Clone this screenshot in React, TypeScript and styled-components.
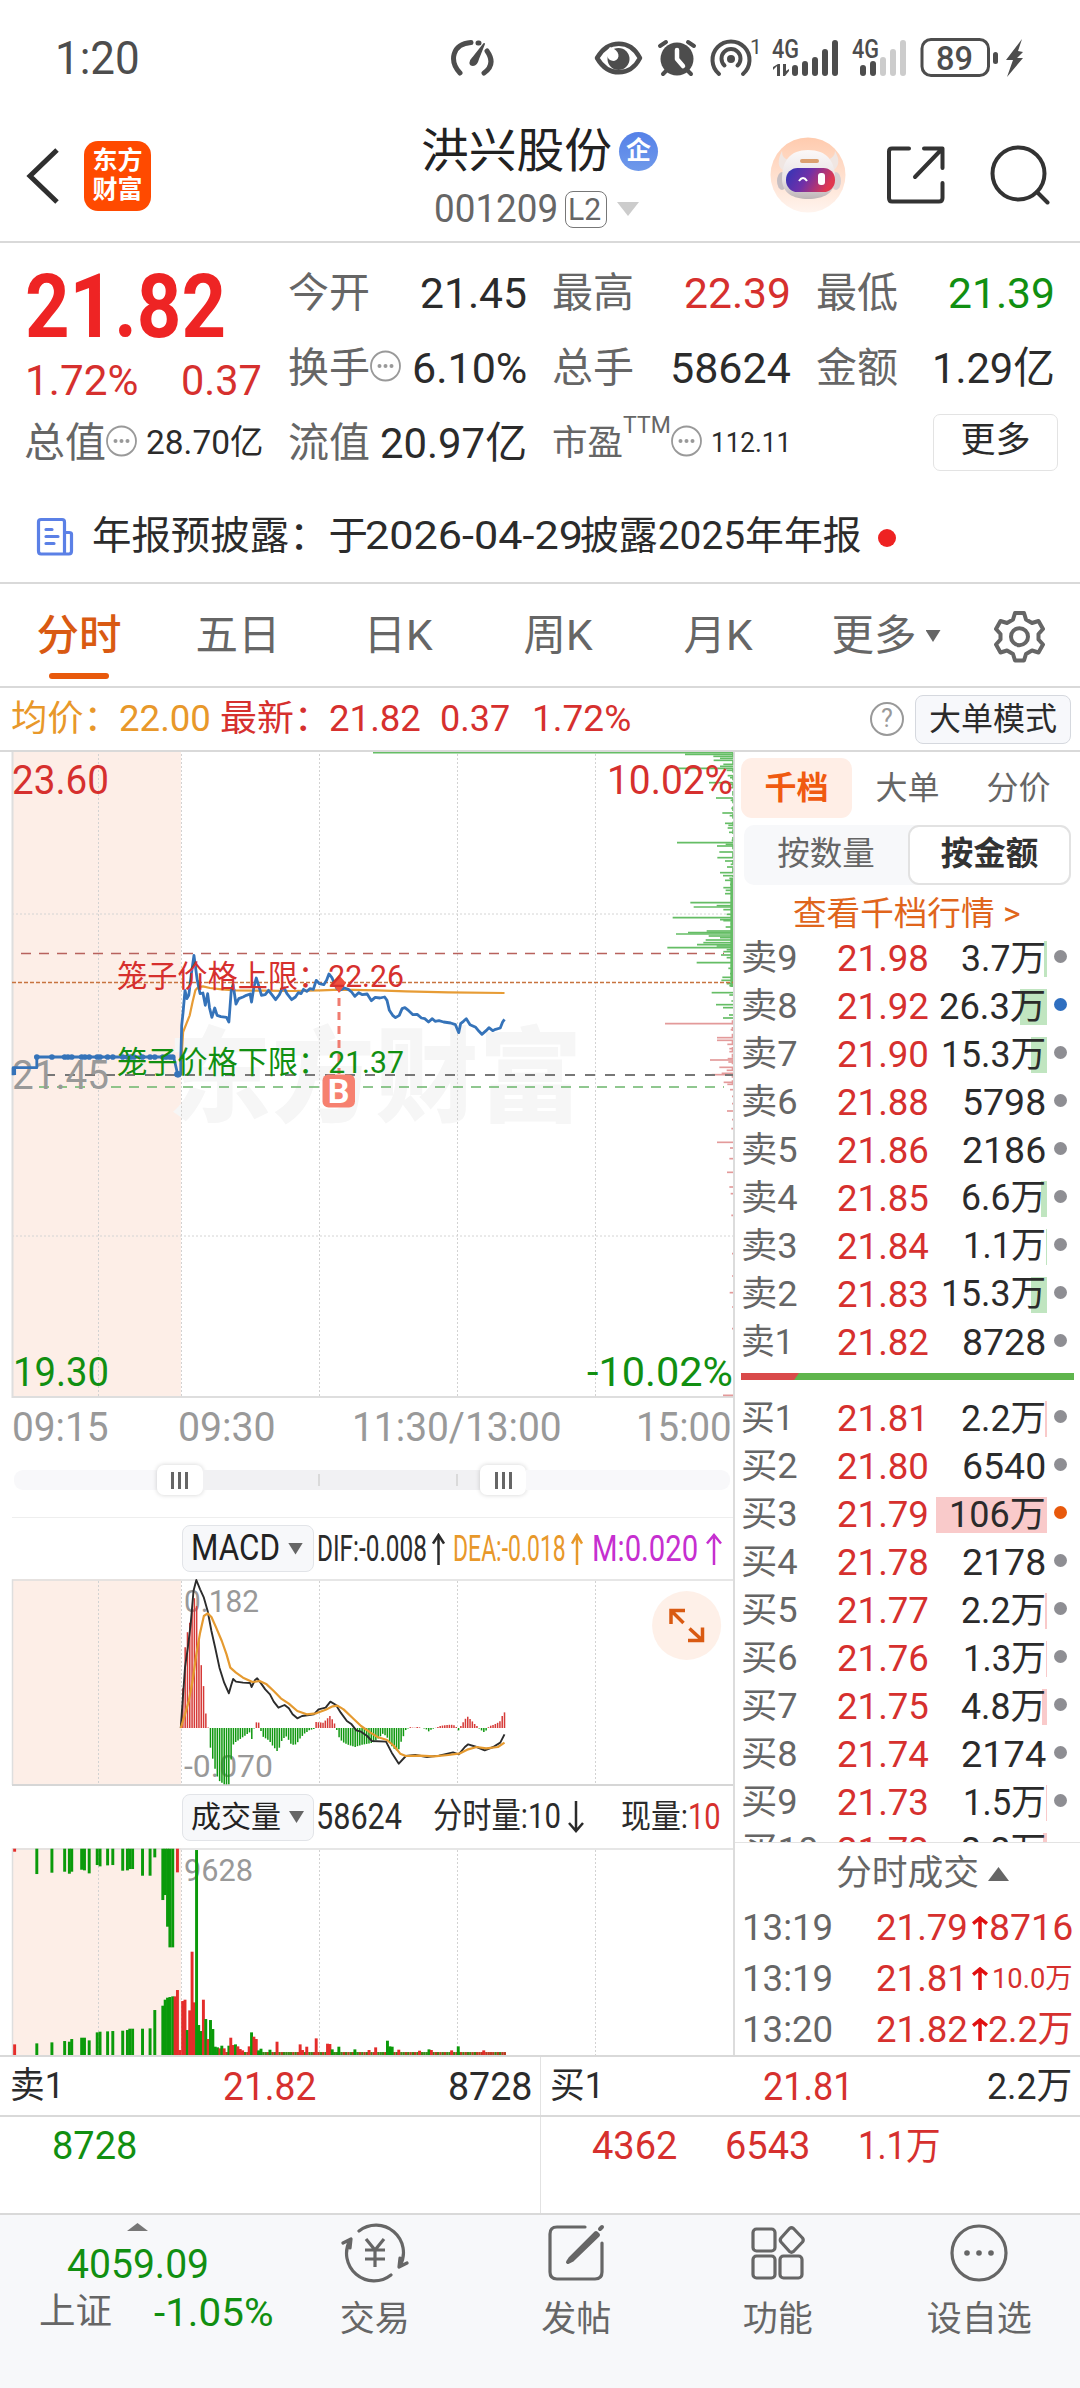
import React, { useLayoutEffect, useRef, useState } from 'react';
import styled, { createGlobalStyle } from 'styled-components';

const C = {
  ink: '#2b2b2b', gray: '#666', light: '#999', red: '#d6302e', green: '#118f11',
  orange: '#e8590c', amber: '#e8982a', line: '#d9d9d9', blue: '#3573b9', pink: '#fdeee7',
};

const Global = createGlobalStyle`
  html, body { margin: 0; background: #fff; }
  body, svg text { font-family: Roboto, "Noto Sans CJK SC", sans-serif; }
  * { box-sizing: border-box; }
  svg { display: block; flex: none; }
`;

/* ---------- text fitted to a fixed width ---------- */
const FitBox = styled.span<{ $w: number; $size: number; $color?: string; $weight?: number }>`
  display: block;
  flex: none;
  width: ${p => p.$w}px;
  font-size: ${p => p.$size}px;
  line-height: ${p => Math.round(p.$size * 1.2)}px;
  color: ${p => p.$color || 'inherit'};
  font-weight: ${p => p.$weight || 400};
  white-space: nowrap;
`;
const FitInner = styled.span`
  display: inline-block;
  margin-left: -2px;
  transform-origin: 0 50%;
  vertical-align: top;
`;
function Fit({ w, s, c, b, children }: { w: number; s: number; c?: string; b?: number; children: React.ReactNode }) {
  const ref = useRef<HTMLSpanElement>(null);
  const [k, setK] = useState(1);
  useLayoutEffect(() => {
    if (ref.current) setK((w + 3) / ref.current.offsetWidth);
  }, [w]);
  return (
    <FitBox $w={w} $size={s} $color={c} $weight={b}>
      <FitInner ref={ref} style={{ transform: `scaleX(${k})` }}>{children}</FitInner>
    </FitBox>
  );
}

const Page = styled.div`
  width: 1080px;
  height: 2388px;
  display: flex;
  flex-direction: column;
  overflow: hidden;
  background: #fff;
  color: ${C.ink};
`;
const Spacer = styled.div<{ $w?: number }>`
  ${p => (p.$w ? `width:${p.$w}px;flex:none;` : 'flex:1;')}
`;

/* ---------- status bar ---------- */
const StatusBar = styled.div`
  height: 116px;
  display: flex;
  align-items: center;
  padding-left: 57px;
  color: #4d4d4d;
`;
const S = '#4d4d4d';
const StatusIcons = () => (
  <svg width="575" height="48" viewBox="449 33 575 48" fill="none" stroke={S} strokeWidth="5" strokeLinecap="round" strokeLinejoin="round">
    <path d="M460 72 C449 60 452 43 471 41.5 M478 42 L479 42 M487 50 C494 60 491 67 484 72" />
    <path d="M484 43 L473 57 C469 61 470 64 473 64 C476 64 477 62 478 58 Z" fill={S} strokeWidth="2" />
    <path d="M597 57 C608 38 630 38 640 57 C630 76 608 76 597 57 Z" strokeWidth="4.5" />
    <circle cx="618.500" cy="58" r="11" fill={S} stroke="none" />
    <path d="M610 46 C620 49 621 58 614 60 C609 60 606 56 607 50 Z" fill="#fff" stroke="none" />
    <circle cx="677" cy="58" r="16.500" fill={S} stroke="none" />
    <path d="M660 45 L666 41 M688 41 L694 45 M667 69 L663 73 M687 69 L691 73" strokeWidth="4" />
    <path d="M677 49 V58 L683 65" stroke="#fff" strokeWidth="4.500" />
    <circle cx="731" cy="58" r="4" fill={S} stroke="none" />
    <path d="M724.500 64.500 A9.500 9.500 0 1 1 737.500 64.500 M719 73 A18.500 18.500 0 1 1 743 73" strokeWidth="4" />
    <g stroke="none" fill={S}>
      <text x="750" y="53" fontSize="21">1</text>
      <text x="772" y="57" fontSize="25" fontWeight="500" textLength="27" lengthAdjust="spacingAndGlyphs">4G</text>
      <path d="M777 75 V65 L773 69 V66 L778 63 H780 V75 Z M783 63 V75 H785 L789 70 V68 L786 70 V63 Z" />
      <rect x="792" y="64" width="6" height="11" rx="3" /><rect x="802" y="60" width="6" height="15" rx="3" />
      <rect x="812" y="56" width="6" height="19" rx="3" /><rect x="822" y="48" width="6" height="27" rx="3" />
      <rect x="832" y="39" width="6" height="36" rx="3" />
      <text x="852" y="57" fontSize="25" fontWeight="500" textLength="27" lengthAdjust="spacingAndGlyphs">4G</text>
      <rect x="860" y="64" width="6" height="11" rx="3" /><rect x="870" y="60" width="6" height="15" rx="3" />
      <g fill="#ccc"><rect x="880" y="56" width="6" height="19" rx="3" /><rect x="890" y="48" width="6" height="27" rx="3" /><rect x="900" y="39" width="6" height="36" rx="3" /></g>
      <text x="936" y="69" fontSize="34" fontWeight="500" textLength="37" lengthAdjust="spacingAndGlyphs">89</text>
      <rect x="993" y="51" width="5" height="12" rx="2.500" />
      <path d="M1022 38 L1006 59 L1013 59 L1007 76 L1023 57 L1017 57 L1023 51 L1018 50 Z" />
    </g>
    <rect x="922" y="38.500" width="66.500" height="36" rx="9" strokeWidth="3" />
  </svg>
);

/* ---------- header ---------- */
const Header = styled.header`
  height: 127px;
  border-bottom: 2px solid ${C.line};
  display: flex;
  align-items: flex-start;
  padding: 6px 29px 0 26px;
`;
const Logo = styled.div`
  width: 67px;
  height: 70px;
  margin: 19px 0 0 25px;
  padding-top: 5px;
  border-radius: 14px;
  background: #ff4a00;
  color: #fff;
  font-size: 25px;
  font-weight: 700;
  line-height: 29px;
  text-align: center;
`;
const Title = styled.div`
  width: 240px;
  margin-left: 272px;
  display: flex;
  flex-direction: column;
`;
const Line = styled.div<{ $h: number; $pl?: number }>`
  display: flex;
  align-items: center;
  height: ${p => p.$h}px;
  padding-left: ${p => p.$pl || 0}px;
`;
const CorpBadge = styled.span`
  width: 39px;
  height: 39px;
  margin-left: 8px;
  border-radius: 50%;
  background: linear-gradient(#5581e8, #6f99ea);
  color: #fff;
  font-size: 25px;
  font-weight: 700;
  line-height: 38px;
  text-align: center;
`;
const Level = styled.span`
  width: 42px;
  height: 37px;
  margin-left: 8px;
  padding-left: 4px;
  border: 1.5px solid #777;
  border-radius: 8px;
  display: flex;
  align-items: center;
  color: ${C.gray};
`;
const Caret = styled.i<{ $w: number; $h: number; $c: string; $up?: boolean; $ml?: number }>`
  width: ${p => p.$w}px;
  height: ${p => p.$h}px;
  margin-left: ${p => p.$ml || 0}px;
  flex: none;
  background: ${p => p.$c};
  clip-path: ${p => (p.$up ? 'polygon(0 100%, 50% 0, 100% 100%)' : 'polygon(0 0, 100% 0, 50% 100%)')};
`;
const Back = () => (
  <svg width="33" height="58" viewBox="0 0 33 58" fill="none" stroke="#2f2f2f" strokeWidth="5"><path d="M31 3 L4 29 L31 55" /></svg>
);
const BackWrap = styled.div`margin-top: 25px;`;
const HeaderTools = styled.div`
  display: flex;
  align-items: center;
  height: 74px;
  margin: 16px 0 0 107px;
`;
const Robot = () => (
  <svg width="76" height="76" viewBox="0 0 76 76">
    <defs>
      <linearGradient id="rb" x1="0" y1="0" x2="0" y2="1"><stop offset="0" stopColor="#ffcbae" /><stop offset="1" stopColor="#fff4ee" /></linearGradient>
      <linearGradient id="rv" x1="0" y1="0" x2="1" y2="0.3"><stop offset="0" stopColor="#2f36b8" /><stop offset="0.5" stopColor="#7030a8" /><stop offset="1" stopColor="#e03850" /></linearGradient>
      <linearGradient id="rh" x1="0" y1="0" x2="0" y2="1"><stop offset="0" stopColor="#fbf8f8" /><stop offset="0.6" stopColor="#e9e3e4" /><stop offset="1" stopColor="#bdb4b6" /></linearGradient>
    </defs>
    <circle cx="38" cy="38" r="37.500" fill="url(#rb)" />
    <path d="M12 14 Q12 22 19 23 L15 34 Q4 30 12 14 M65 14 Q65 20 58 23 L62 34 Q73 28 65 14" fill="#f0e6e2" />
    <ellipse cx="12" cy="44" rx="5" ry="9" fill="#c6bec2" /><ellipse cx="66" cy="44" rx="5" ry="9" fill="#d8d0d2" />
    <path d="M12 42 C12 24 20 13 38 13 C57 13 65 24 65 42 C65 56 54 62 38 62 C23 62 12 56 12 42 Z" fill="url(#rh)" />
    <rect x="30" y="22" width="19" height="4" rx="2" fill="#dca070" />
    <rect x="16" y="31" width="49" height="24" rx="11.500" fill="url(#rv)" />
    <path d="M29 44 Q33 38 37 44" fill="none" stroke="#fff" strokeWidth="2" /><rect x="48" y="36" width="7" height="12" rx="3" fill="#fff" />
  </svg>
);
const Share = () => (
  <svg width="58" height="58" viewBox="0 0 58 58" fill="none" stroke="#333" strokeWidth="4" strokeLinecap="round" strokeLinejoin="round">
    <path d="M22 2.500 H5 Q2 2.500 2 5.500 V52 Q2 55.500 5 55.500 H52 Q55.500 55.500 55.500 52 V37 M37 2.500 H55.500 V22 M53 5 L28 31" />
  </svg>
);
const Search = () => (
  <svg width="60" height="60" viewBox="0 0 60 60" fill="none" stroke="#333" strokeWidth="4" strokeLinecap="round">
    <circle cx="28.500" cy="28.500" r="26" /><path d="M47 47 L57.500 57.500" />
  </svg>
);

/* ---------- quote summary ---------- */
const Quote = styled.section`
  height: 240px;
  display: grid;
  grid-template-columns: repeat(4, 237px);
  grid-template-rows: 75px 75px 75px;
  column-gap: 27px;
  padding: 12px 0 0 25px;
`;
const Cell = styled.div`
  display: flex;
  align-items: center;
  justify-content: space-between;
`;
const Main = styled.div`
  grid-row: span 2;
  display: flex;
  flex-direction: column;
  margin-top: -2px;
  padding-left: 2px;
`;
const Change = styled.div`
  display: flex;
  justify-content: space-between;
  margin-top: -6px;
  width: 234px;
`;
const Label = styled.span<{ $s?: number }>`
  display: flex;
  align-items: center;
  margin-left: -1px;
  font-size: ${p => p.$s || 41}px;
  line-height: 50px;
  color: ${C.gray};
`;
const Ttm = styled.span`
  align-self: flex-start;
  margin-top: -4px;
  font-size: 23px;
  line-height: 24px;
  width: 48px;
`;
const More = styled.button`
  margin: 0 -4px 0 auto;
  width: 125px;
  height: 57px;
  padding: 0 0 3px;
  border: 1.5px solid #e3e3e3;
  border-radius: 7px;
  background: #fff;
  font: 35px/50px Roboto, "Noto Sans CJK SC", sans-serif;
  color: ${C.ink};
`;
const Dots = ({ r = 14.500 }: { r?: number }) => (
  <svg width="31" height="36" viewBox="-15.500 -16 31 36">
    <circle r={r} fill="none" stroke="#999" strokeWidth="1.800" />
    {[-6, 0, 6].map(x => <circle key={x} cx={x} r="2" fill="#999" />)}
  </svg>
);
const Notice = styled.section`
  height: 101px;
  border-bottom: 2px solid ${C.line};
  display: flex;
  align-items: center;
  padding: 8px 0 0 36px;
`;
const NoticeText = styled.div`display:flex; margin-left: 20px;`;
const RedDot = styled.i`
  width: 18px;
  height: 18px;
  margin: 2px 0 0 17px;
  border-radius: 50%;
  background: #ee2222;
`;

/* ---------- tabs ---------- */
const Tabs = styled.nav`
  height: 104px;
  border-bottom: 2px solid ${C.line};
  display: flex;
`;
const Tab = styled.div<{ $on?: boolean; $w?: number }>`
  width: ${p => p.$w || 160}px;
  height: 102px;
  display: flex;
  flex-direction: column;
  align-items: center;
  padding-top: 26px;
  font-size: 42.5px;
  line-height: 52px;
  color: ${p => (p.$on ? '#d95a12' : C.gray)};
  font-weight: ${p => (p.$on ? 500 : 400)};
  &::after {
    content: '';
    width: 60px;
    height: 6px;
    margin-top: 11px;
    border-radius: 3px;
    background: ${p => (p.$on ? C.orange : 'transparent')};
  }
`;
const TabRow = styled.span`display:flex; align-items:center;`;
const GearWrap = styled.div`margin: 26px 0 0 35px;`;
const Gear = () => (
  <svg width="53" height="53" viewBox="0 0 53 53" fill="none" stroke={C.gray} strokeWidth="4" strokeLinejoin="round">
    <path d="M22 3 H31 L33 9.500 L39 13 L45.500 11 L50 19 L45.500 24 V29.500 L50 34.500 L45.500 42.500 L39 40.500 L33 44 L31 50.500 H22 L20 44 L14 40.500 L7.500 42.500 L3 34.500 L7.500 29.500 V24 L3 19 L7.500 11 L14 13 L20 9.500 Z" />
    <circle cx="26.500" cy="26.700" r="8.500" />
  </svg>
);
const InfoBar = styled.div`
  height: 64px;
  border-bottom: 2px solid ${C.line};
  display: flex;
  align-items: center;
  padding-left: 13px;
`;
const Help = styled.span`
  width: 34px;
  height: 34px;
  border: 2px solid #999;
  border-radius: 50%;
  font-size: 25px;
  line-height: 30px;
  text-align: center;
  color: #999;
`;
const Mode = styled.button`
  width: 156px;
  height: 49px;
  margin-left: 11px;
  padding: 0;
  border: 1.5px solid #d5d8de;
  border-radius: 8px;
  background: #f7f8fb;
  font: 32px/44px Roboto, "Noto Sans CJK SC", sans-serif;
  color: ${C.ink};
`;

/* ---------- main area ---------- */
const Body = styled.div`
  height: 1305px;
  display: flex;
  border-bottom: 2px solid ${C.line};
`;
const Charts = styled.div`
  width: 735px;
  border-right: 2px solid #dcdcdc;
  display: flex;
  flex-direction: column;
`;
const K = 740 / 1568;
const T = 1 / 3;
const GRID_X = [98, 181, 319, 457, 595];
const VGrid = ({ h }: { h: number }) => (
  <g stroke="#d2d2d2" strokeWidth="1" strokeDasharray="2 2">
    {GRID_X.map(x => <line key={x} x1={x + 0.5} x2={x + 0.5} y1="2" y2={h} />)}
  </g>
);
const T2 = ({ x, y, s, w, f, children }: { x: number; y: number; s: number; w: number; f: string; children: string }) => (
  <text x={x - 2} y={y} fontSize={s} fill={f} textLength={w + 3} lengthAdjust="spacingAndGlyphs">{children}</text>
);

const PRICE = '383,1000 383,960 385,850 388,810 392,745 396,770 400,760 405,700 411,640 418,715 424,755 430,753 435,790 440,755 444,798 449,826 455,798 460,820 468,824 480,826 485,840 490,745 494,728 500,786 506,770 515,765 522,760 530,756 533,780 538,735 543,708 548,730 554,760 562,758 569,745 576,758 584,773 592,758 597,742 602,738 608,755 618,773 626,765 632,752 638,755 643,742 650,748 657,740 664,742 670,715 677,725 686,728 692,715 697,696 703,706 708,722 714,740 720,745 730,738 738,742 745,750 752,763 760,752 768,758 778,756 787,776 795,766 805,768 815,765 820,775 825,805 832,820 838,827 846,820 852,800 858,797 866,806 875,818 884,817 893,828 900,830 908,840 916,830 922,838 930,836 940,840 955,843 965,848 972,872 976,845 982,838 988,830 996,848 1008,856 1015,868 1021,877 1030,866 1036,857 1044,866 1050,862 1060,858 1065,840 1069,832';
const AVG = '384,960 388,870 395,845 402,820 408,780 414,745 420,735 430,733 445,738 470,742 500,745 560,746 620,747 680,745 720,743 800,745 860,748 950,751 1069,753';
const SPIKES: [number, number][] = [[17, -561], [22, 375], [28, 460], [34, 480], [40, 461], [52, 490], [58, 480], [64, 350], [70, 500], [86, 503], [92, 510], [107, 447], [112, 505], [122, 507], [153, 468], [160, 512], [184, 514], [198, 487], [206, 509], [229, 495], [235, 505], [243, 503], [256, 507], [280, 515], [287, 351], [292, 497], [297, 471], [315, 478], [332, 472], [342, 495], [352, 512], [360, 501], [377, 480], [386, 489], [394, 508], [400, 495], [412, 510], [422, 490], [430, 497], [440, 495], [452, 512], [467, 391], [473, 512], [476, 470], [480, 401], [488, 490], [502, 500], [512, 338], [518, 480], [521, 490], [530, 512], [540, 497], [552, 440], [557, 384], [561, 348], [567, 446], [572, 480], [579, 437], [587, 430], [593, 411], [597, 470], [602, 322], [608, 500], [614, 490], [624, 483], [632, 500], [647, 410], [656, 512], [664, 505], [680, 510], [691, 487], [700, 484], [710, 500], [716, 508], [737, 455], [744, 508], [762, 514], [773, 468], [782, 489], [804, 507], [813, 489]];
const SPIKES_RED: [number, number][] = [[830, 315], [848, 512], [872, 471], [880, 471], [892, 502], [905, 508], [914, 508], [935, 503], [939, 450], [945, 505], [961, 478], [970, 500], [979, 485], [983, 455], [1006, 491], [1012, 502], [1028, 510], [1048, 516], [1070, 516], [1092, 501], [1118, 516], [1145, 514], [1186, 471], [1203, 510], [1235, 508], [1276, 501], [1320, 508], [1340, 512], [1405, 514], [1637, 509], [1520, 516], [1587, 516], [1680, 516], [1745, 516], [1945, 489]];
const AUCTION_DOTS = [78, 110, 137, 144, 152, 173, 180, 189, 206, 212, 228, 239, 260, 270, 277, 284, 302, 318, 328, 345, 352, 360, 366];

const PriceChart = () => (
  <svg width="734" height="646" viewBox="0 0 734 646">
    <rect x="12" y="0" width="169" height="644" fill={C.pink} />
    <text x="168" y="362" fontSize="103" fontWeight="900" fill="#f6f6f6" textLength="414">东方财富</text>
    <VGrid h={644} />
    <g stroke="#d4d4d4" strokeDasharray="2 2"><line x1="12" x2="733" y1="162" y2="162" /><line x1="12" x2="733" y1="484" y2="484" /></g>
    <line x1="12.500" x2="12.500" y1="0" y2="646" stroke="#dedede" strokeWidth="2" />
    <line x1="12" x2="733" y1="645" y2="645" stroke="#dedede" strokeWidth="2" />
    <g transform="translate(560 -5) scale(.33333)" strokeWidth="5">
      <g stroke="#65bd65">{SPIKES.map(([y, x]) => <line key={y} x1={x} x2="519" y1={y} y2={y} />)}
        <path d="M515 395 V720" strokeWidth="8" /><path d="M518 17 V390" strokeWidth="3" strokeDasharray="14 9" /></g>
      <g stroke="#e39a9a">{SPIKES_RED.map(([y, x]) => <line key={y} x1={x} x2="519" y1={y} y2={y} />)}
        <path d="M517 820 V1020" strokeWidth="4" strokeDasharray="12 8" /></g>
    </g>
    <g fill="none" strokeWidth="1.700">
      <line x1="21" x2="724" y1="201.500" y2="201.500" stroke="#b8625d" strokeDasharray="10 8" />
      <line x1="12" x2="733" y1="230.500" y2="230.500" stroke="#c8733f" strokeDasharray="4 2" />
      <line x1="45" x2="733" y1="323" y2="323" stroke="#777" strokeWidth="2" strokeDasharray="10 10" />
      <line x1="21" x2="724" y1="335" y2="335" stroke="#6bb56b" strokeDasharray="10 8" />
    </g>
    <T2 x={14} y={337} s={40.5} w={94} f={C.light}>21.45</T2>
    <g transform={`translate(0 -10) scale(${K} ${T})`} fill="none" strokeLinejoin="round">
      <polyline points={AVG} stroke="#e79c35" strokeWidth="2.200" vectorEffect="non-scaling-stroke" />
      <polyline points="28,1000 28,977 78,977 78,945 368,945 377,1000" stroke={C.blue} strokeWidth="2.800" vectorEffect="non-scaling-stroke" />
      <polyline points={PRICE} stroke={C.blue} strokeWidth="2.800" vectorEffect="non-scaling-stroke" />
      {AUCTION_DOTS.map(x => <ellipse key={x} cx={x} cy="945" rx="6" ry="8.500" fill={C.blue} />)}
      <ellipse cx="377" cy="997" rx="8" ry="10" fill={C.blue} /><rect x="25" y="977" width="9" height="22" fill={C.blue} />
    </g>
    <path d="M339 223 L346 231 L339 241 L332 231 Z" fill="#f0503e" />
    <line x1="339" x2="339" y1="246" y2="322" stroke="#f07c70" strokeWidth="3" strokeDasharray="8 6" />
    <T2 x={119} y={235} s={31} w={284} f={C.red}>笼子价格上限：22.26</T2>
    <T2 x={119} y={320.5} s={31} w={284} f={C.green}>笼子价格下限：21.37</T2>
    <rect x="322.500" y="322.500" width="32.500" height="33" rx="6" fill="#f6806f" />
    <text x="338.700" y="351" fontSize="34" fontWeight="700" fill="#fff" textAnchor="middle">B</text>
    <T2 x={14} y={41.5} s={40.5} w={94} f={C.red}>23.60</T2>
    <T2 x={609} y={41.5} s={40.5} w={123} f={C.red}>10.02%</T2>
    <T2 x={15} y={633.5} s={40.5} w={93} f={C.green}>19.30</T2>
    <T2 x={589} y={633.5} s={40.5} w={143} f={C.green}>-10.02%</T2>
  </svg>
);

const Times = styled.div`
  height: 60px;
  padding-left: 14px;
  display: grid;
  align-items: center;
  grid-template-columns: 166px 174px 284px 94px;
`;
const SliderArea = styled.div`
  height: 59px;
  padding: 7px 3px 0 14px;
`;
const Track = styled.div`
  height: 30px;
  display: flex;
  align-items: center;
`;
const Rail = styled.div<{ $w: number; $mid?: boolean; $side?: 'l' | 'r' }>`
  width: ${p => p.$w}px;
  height: 20px;
  background: ${p => (p.$mid ? '#f1f1f3' : '#f8f8fa')};
  border-radius: ${p => (p.$side === 'l' ? '9px 0 0 9px' : p.$side === 'r' ? '0 9px 9px 0' : '0')};
  display: flex;
  align-items: center;
  padding-left: ${p => (p.$mid ? 115 : 0)}px;
  gap: 136px;
`;
const Tick = styled.i`width:2px; height:12px; background:#dadada; flex:none;`;
const Handle = styled.div`
  width: 46px;
  height: 30px;
  border-radius: 7px;
  background: #fff;
  box-shadow: 0 0 5px rgba(0, 0, 0, .18);
  display: flex;
  justify-content: center;
  align-items: center;
  gap: 4px;
  & > i { width: 3px; height: 17px; background: #666; }
`;
const IndicatorBar = styled.div<{ $h: number; $line?: boolean }>`
  height: ${p => p.$h}px;
  margin-left: 12px;
  padding-left: 170px;
  display: flex;
  align-items: center;
  border-top: ${p => (p.$line ? '1px solid #eee' : '0')};
`;
const Picker = styled.div`
  width: 132px;
  height: 47px;
  flex: none;
  border: 1.5px solid #e2e4e8;
  border-radius: 8px;
  background: #f7f8fa;
  display: flex;
  align-items: center;
  padding-left: 10px;
  color: #222;
`;
const Arrow = ({ c, down, w = 13, h = 32, sw = 2.5 }: { c: string; down?: boolean; w?: number; h?: number; sw?: number }) => (
  <svg width={w} height={h} viewBox={`0 0 ${w} ${h}`} fill="none" stroke={c} strokeWidth={sw}>
    {down ? <path d={`M${w / 2} 0 V${h - 2} M1 ${h - 10} L${w / 2} ${h - 2} L${w - 1} ${h - 10}`} />
      : <path d={`M${w / 2} ${h} V2 M1 ${h * .33} L${w / 2} 2 L${w - 1} ${h * .33}`} />}
  </svg>
);

const HIST: [number, number][] = [[387, 575], [392, 442], [397, 395], [402, 366], [406, 330], [411, 290], [416, 300], [421, 408], [426, 487], [431, 549], [435, 630], [440, 663], [444, 727], [450, 768], [455, 800], [460, 825], [465, 840], [475, 850], [486, 850], [490, 770], [495, 727], [505, 718], [520, 703], [530, 693], [533, 718], [537, 690], [542, 664], [548, 664], [553, 690], [558, 708], [570, 718], [578, 735], [587, 750], [592, 740], [598, 715], [607, 706], [618, 732], [628, 730], [636, 712], [645, 698], [655, 688], [665, 684], [668, 663], [685, 665], [694, 652], [699, 645], [704, 655], [709, 668], [713, 684], [718, 708], [725, 722], [735, 730], [752, 738], [765, 732], [790, 725], [802, 712], [812, 697], [822, 712], [832, 740], [840, 748], [845, 745], [850, 722], [855, 705], [860, 686], [865, 682], [870, 678], [877, 681], [885, 678], [895, 681], [905, 686], [909, 692], [914, 685], [922, 681], [935, 674], [955, 671], [965, 673], [971, 690], [976, 676], [985, 655], [991, 647], [997, 655], [1005, 668], [1012, 677], [1018, 686], [1025, 693], [1031, 688], [1036, 676], [1048, 670], [1055, 665], [1060, 660], [1064, 645], [1070, 632]];
const at = (x: number) => {
  for (let i = 1; i < HIST.length; i++) {
    const [x1, y1] = HIST[i - 1], [x2, y2] = HIST[i];
    if (x <= x2) return y1 + ((y2 - y1) * (x - x1)) / (x2 - x1);
  }
  return 632;
};
const BARS = Array.from({ length: 141 }, (_, i) => { const x = 387.5 + i * 4.868; return [x, at(x)]; });
const DIF = '383,681 387,600 392,500 398,440 404,370 410,270 416,237 424,265 432,290 440,330 448,390 456,440 465,500 475,545 485,577 490,552 494,534 500,542 515,545 530,546 533,558 540,538 545,532 552,545 562,565 572,580 580,602 590,620 603,612 612,622 620,640 630,652 640,645 655,642 665,640 675,625 690,620 700,602 712,612 722,635 735,660 745,670 755,688 765,692 778,705 788,720 818,722 830,755 845,788 860,765 880,762 905,768 930,764 960,754 972,760 985,738 992,730 1010,738 1027,748 1045,738 1060,725 1069,700';
const DEA = '383,681 392,640 400,600 408,540 416,460 424,395 432,345 440,337 448,348 458,380 470,420 480,460 488,500 500,515 515,530 535,543 550,540 565,550 580,570 595,592 612,608 630,630 650,640 670,637 690,626 705,616 715,614 728,625 745,648 765,675 785,695 800,708 820,717 835,735 848,758 860,765 890,764 920,766 950,762 975,757 990,746 1010,738 1030,742 1055,738 1069,725';

const MacdChart = () => (
  <svg width="734" height="207" viewBox="0 0 734 207">
    <rect x="12" y="0" width="169" height="206" fill={C.pink} />
    <VGrid h={205} />
    <path d="M12.500 206 V1 H733" fill="none" stroke="#dedede" strokeWidth="1.500" />
    <line x1="12" x2="733" y1="206" y2="206" stroke="#d6d6d6" strokeWidth="2" />
    <T2 x={186} y={33} s={31} w={72} f={C.light}>0.182</T2>
    <T2 x={186} y={198} s={31} w={86} f={C.light}>-0.070</T2>
    <g transform={`translate(0 -78) scale(${K} ${T})`} fill="none" strokeLinejoin="round">
      {BARS.map(([x, y]) => <line key={x} x1={x} x2={x} y1="681" y2={y} stroke={y < 681 ? '#d63a38' : '#109810'} strokeWidth="3.200" />)}
      <polyline points={DIF} stroke="#2c2c2c" strokeWidth="1.900" vectorEffect="non-scaling-stroke" />
      <polyline points={DEA} stroke="#e59a30" strokeWidth="2.200" vectorEffect="non-scaling-stroke" />
    </g>
    <circle cx="686.600" cy="46.500" r="34.500" fill="#fef0e8" />
    <path d="M671 45 V31.500 H685 M671 31.500 L683.500 44 M702.500 48.500 V61.500 H688 M702.500 61.500 L689.500 49.500" fill="none" stroke="#d95a12" strokeWidth="3.500" />
  </svg>
);

type VBar = [number, number, 'r' | 'g'];
const TOP: VBar[] = [[31, 210, 'r'], [78, 277, 'g'], [110, 273, 'g'], [137, 270, 'g'], [147, 276, 'g'], [152, 270, 'g'], [173, 264, 'g'], [179, 266, 'g'], [189, 275, 'g'], [206, 250, 'g'], [212, 254, 'g'], [228, 251, 'g'], [239, 250, 'g'], [260, 267, 'g'], [270, 266, 'g'], [275, 262, 'g'], [281, 262, 'g'], [302, 282, 'g'], [318, 282, 'g'], [328, 227, 'g'], [345, 355, 'g'], [350, 340, 'g'], [355, 435, 'g'], [360, 497, 'g'], [366, 497, 'g'], [376, 272, 'r']];
const LOW: VBar[] = [[31, 788, 'r'], [78, 785, 'g'], [110, 782, 'g'], [137, 778, 'g'], [147, 780, 'g'], [152, 772, 'g'], [173, 768, 'g'], [179, 768, 'g'], [189, 776, 'g'], [206, 752, 'g'], [212, 750, 'g'], [228, 749, 'g'], [239, 748, 'g'], [260, 747, 'g'], [270, 745, 'g'], [275, 741, 'g'], [281, 741, 'g'], [302, 741, 'g'], [318, 740, 'g'], [328, 685, 'g'], [345, 672, 'g'], [350, 654, 'g'], [355, 648, 'g'], [360, 646, 'g'], [366, 644, 'g'], [371, 644, 'r'], [376, 625, 'r'], [381, 805, 'r'], [387, 658, 'r'], [392, 654, 'r'], [397, 745, 'g'], [402, 686, 'r'], [407, 510, 'r'], [412, 662, 'r'], [416.5, 205, 'g'], [421, 730, 'g'], [426, 748, 'g'], [431, 654, 'r'], [436, 712, 'g'], [441, 772, 'r'], [446, 715, 'g'], [451, 742, 'g'], [456, 795, 'g'], [461, 797, 'g'], [466, 800, 'r'], [470, 792, 'g'], [475, 800, 'r'], [485, 792, 'g'], [489, 768, 'r'], [494, 790, 'r'], [499, 788, 'g'], [504, 794, 'r'], [509, 802, 'r'], [514, 806, 'r'], [528, 794, 'r'], [533, 752, 'g'], [538, 765, 'r'], [543, 772, 'r'], [548, 806, 'g'], [553, 801, 'g'], [572, 804, 'g'], [587, 780, 'r'], [636, 788, 'r'], [641, 805, 'r'], [650, 795, 'r'], [670, 770, 'r'], [694, 786, 'r'], [699, 787, 'r'], [704, 803, 'g'], [718, 795, 'g'], [752, 803, 'g'], [782, 805, 'r'], [796, 797, 'r'], [821, 777, 'g'], [826, 794, 'g'], [831, 795, 'g'], [845, 804, 'r'], [889, 807, 'r'], [909, 803, 'g'], [914, 805, 'r'], [957, 806, 'r'], [971, 794, 'g'], [1025, 806, 'r']];
const BASE: VBar[] = Array.from({ length: 127 }, (_, i) => [456 + i * 4.87, 811, (i * 7 + (i >> 2)) % 5 < (i > 110 ? 4 : 2) ? 'r' : 'g']);
const VC = { r: '#e42d2b', g: '#0a9a0a' };
const VolumeChart = () => (
  <svg width="734" height="207" viewBox="0 0 734 207">
    <rect x="12" y="0" width="169" height="207" fill={C.pink} />
    <VGrid h={207} />
    <path d="M12.500 207 V1 H733" fill="none" stroke="#dedede" strokeWidth="1.500" />
    <T2 x={186} y={33} s={31} w={66} f={C.light}>9628</T2>
    <g transform={`translate(0 -66.300) scale(${K} ${T})`}>
      {BASE.map(([x, y, c]) => <rect key={x} x={x - 2.5} width="5" y={y} height={820 - y} fill={c === 'r' ? '#b83a20' : '#3c8416'} />)}
      {TOP.map(([x, y, c]) => <rect key={x} x={x - 3.1} width="6.200" y="201" height={y - 201} fill={VC[c]} />)}
      {LOW.map(([x, y, c]) => <rect key={x} x={x - 3.1} width="6.200" y={y} height={820 - y} fill={VC[c]} />)}
    </g>
  </svg>
);

/* ---------- order book ---------- */
const Book = styled.aside`
  width: 345px;
  display: flex;
  flex-direction: column;
`;
const BookTabs = styled.div`
  display: flex;
  height: 66px;
  padding: 6px 0 0 6px;
`;
const BookTab = styled.div<{ $on?: boolean }>`
  width: 111px;
  height: 60px;
  border-radius: 11px;
  background: ${p => (p.$on ? '#ffeee6' : 'transparent')};
  color: ${p => (p.$on ? '#f05a10' : C.gray)};
  font-size: 32px;
  font-weight: ${p => (p.$on ? 700 : 400)};
  line-height: 60px;
  text-align: center;
`;
const Segment = styled.div`
  display: flex;
  height: 60px;
  width: 327px;
  margin: 7px 0 0 9px;
  background: #f7f8fa;
  border-radius: 10px;
`;
const SegItem = styled.div<{ $on?: boolean }>`
  width: ${p => (p.$on ? 163 : 164)}px;
  border: ${p => (p.$on ? '2px solid #e2e2e2' : '0')};
  background: ${p => (p.$on ? '#fff' : 'transparent')};
  border-radius: 11px;
  font-size: 32.5px;
  font-weight: ${p => (p.$on ? 700 : 400)};
  line-height: ${p => (p.$on ? 55 : 59)}px;
  text-align: center;
  color: ${p => (p.$on ? '#333' : C.gray)};
`;
const Link = styled.div`
  height: 51px;
  padding: 9px 0 0 60px;
  color: #e0651c;
`;
const Rows = styled.div<{ $h: number; $pt?: number }>`
  height: ${p => p.$h}px;
  padding-top: ${p => p.$pt || 0}px;
  overflow: hidden;
`;
const Row = styled.div<{ $h: number }>`
  height: ${p => p.$h}px;
  display: flex;
  align-items: center;
  padding-left: 8px;
`;
const Price = styled.div`width: 89px; margin-left: auto;`;
const Qty = styled.div<{ $bar: number; $buy?: boolean }>`
  width: 119px;
  height: 36px;
  padding-right: 2px;
  display: flex;
  align-items: center;
  justify-content: flex-end;
  background: linear-gradient(${p => (p.$buy ? '#f9caca, #f9caca' : '#c0e5c0, #c0e5c0')}) right / ${p => p.$bar}px 100% no-repeat;
`;
const Dot = styled.i<{ $c?: string }>`
  width: 13px;
  height: 13px;
  margin: 0 13px 5px 7px;
  border-radius: 50%;
  background: ${p => p.$c || '#8e8e93'};
`;
const Ratio = styled.div`
  height: 7px;
  width: 333px;
  margin: 0 0 11px 6px;
  background: linear-gradient(125deg, #d94a4a 0 47px, #5fb54d 48px);
`;
const NUM = 37;
type Lv = [string, string, string, number, number, string?];
const SELL: Lv[] = [['卖9', '21.98', '3.7万', 82, 3], ['卖8', '21.92', '26.3万', 104, 27, '#2f6fc0'], ['卖7', '21.90', '15.3万', 102, 16], ['卖6', '21.88', '5798', 81, 0], ['卖5', '21.86', '2186', 81, 0], ['卖4', '21.85', '6.6万', 82, 6], ['卖3', '21.84', '1.1万', 80, 1], ['卖2', '21.83', '15.3万', 102, 16], ['卖1', '21.82', '8728', 81, 0]];
const BUY: Lv[] = [['买1', '21.81', '2.2万', 82, 2], ['买2', '21.80', '6540', 81, 0], ['买3', '21.79', '106万', 94, 111, C.orange], ['买4', '21.78', '2178', 81, 0], ['买5', '21.77', '2.2万', 82, 2], ['买6', '21.76', '1.3万', 80, 1], ['买7', '21.75', '4.8万', 82, 5], ['买8', '21.74', '2174', 82, 0], ['买9', '21.73', '1.5万', 80, 1], ['买10', '21.72', '2.2万', 82, 4]];
const Mixed = ({ t, w, c }: { t: string; w: number; c?: string }) => <Fit w={w} s={t.endsWith('万') ? 36 : NUM} c={c}>{t}</Fit>;
const Level10 = ({ d, buy }: { d: Lv; buy?: boolean }) => (
  <Row $h={buy ? 48 : 47.9}>
    <Fit w={d[0].length > 2 ? 74 : d[0].endsWith('1') ? 50 : 54} s={35} c={C.gray}>{d[0]}</Fit>
    <Price><Fit w={89} s={NUM} c={C.red}>{d[1]}</Fit></Price>
    <Qty $bar={d[4]} $buy={buy}><Mixed t={d[2]} w={d[3]} /></Qty>
    <Dot $c={d[5]} />
  </Row>
);
const Trades = styled.div`
  flex: 1;
  border-top: 1.5px solid #e3e3e3;
`;
const TradesHead = styled.div`
  height: 59px;
  display: flex;
  align-items: center;
  padding: 3px 0 0 103px;
`;
const TradeRow = styled.div`
  height: 51px;
  display: flex;
  align-items: center;
  padding: 0 8px 0 9px;
`;

/* ---------- queue & bottom nav ---------- */
const Queue = styled.div<{ $h: number }>`
  height: ${p => p.$h}px;
  display: flex;
  border-bottom: 2px solid ${C.line};
`;
const Half = styled.div<{ $pl: number; $first?: boolean; $pt?: number; $gap?: number }>`
  width: ${p => (p.$first ? 541 : 539)}px;
  border-right: ${p => (p.$first ? '1.5px solid #e2e2e2' : '0')};
  display: flex;
  align-items: ${p => (p.$pt ? 'flex-start' : 'center')};
  padding: ${p => p.$pt || 1}px 0 0 ${p => p.$pl}px;
  gap: ${p => p.$gap || 0}px;
`;
const Nav = styled.nav`
  flex: 1;
  background: #f7f8fa;
  display: flex;
`;
const Index = styled.div`
  width: 274px;
  padding-top: 8px;
  display: flex;
  flex-direction: column;
`;
const NavItem = styled.div`
  width: 201.5px;
  display: flex;
  flex-direction: column;
  align-items: center;
  padding-top: 6px;
  font-size: 35px;
  line-height: 44px;
  color: ${C.gray};
  & > svg { margin-bottom: 13px; }
`;
const NavSvg = ({ children }: { children: React.ReactNode }) => (
  <svg width="68" height="64" viewBox="-34 -32 68 64" fill="none" stroke={C.gray} strokeWidth="3.200" strokeLinecap="round" strokeLinejoin="round">{children}</svg>
);

export default function App() {
  return (
    <Page>
      <Global />
      <StatusBar>
        <Fit w={82} s={46}>1:20</Fit>
        <Spacer $w={310} />
        <StatusIcons />
      </StatusBar>
      <Header>
        <BackWrap><Back /></BackWrap>
        <Logo>东方<br />财富</Logo>
        <Title>
          <Line $h={58}><Fit w={188} s={47} c="#222">洪兴股份</Fit><CorpBadge>企</CorpBadge></Line>
          <Line $h={58} $pl={13}>
            <Fit w={121} s={38} c={C.gray}>001209</Fit>
            <Level><Fit w={30} s={32}>L2</Fit></Level>
            <Caret $w={22} $h={14} $c="#ccc" $ml={10} />
          </Line>
        </Title>
        <HeaderTools><Robot /><Spacer $w={41} /><Share /><Spacer $w={45} /><Search /></HeaderTools>
      </Header>

      <Quote>
        <Main>
          <Fit w={198} s={89} c="#ee2424" b={700}>21.82</Fit>
          <Change><Fit w={110} s={43} c={C.red}>1.72%</Fit><Fit w={78} s={43} c={C.red}>0.37</Fit></Change>
        </Main>
        <Cell><Label>今开</Label><Fit w={104} s={43}>21.45</Fit></Cell>
        <Cell><Label>最高</Label><Fit w={104} s={43} c={C.red}>22.39</Fit></Cell>
        <Cell><Label>最低</Label><Fit w={104} s={43} c={C.green}>21.39</Fit></Cell>
        <Cell><Label>换手<Dots /></Label><Fit w={112} s={43}>6.10%</Fit></Cell>
        <Cell><Label>总手</Label><Fit w={118} s={43}>58624</Fit></Cell>
        <Cell><Label>金额</Label><Fit w={120} s={43}>1.29亿</Fit></Cell>
        <Cell><Label>总值<Dots /></Label><Fit w={114} s={34}>28.70亿</Fit></Cell>
        <Cell><Label>流值</Label><Fit w={144} s={43}>20.97亿</Fit></Cell>
        <Cell><Label $s={35.5}>市盈<Ttm>TTM</Ttm><Dots /></Label><Fit w={77} s={28}>112.11</Fit></Cell>
        <Cell><More>更多</More></Cell>
      </Quote>

      <Notice>
        <svg width="38" height="40" viewBox="0 0 38 40" fill="none" stroke="#5b80e6" strokeWidth="3.200" strokeLinecap="round" strokeLinejoin="round">
          <path d="M29 37 H5 Q2.500 37 2.500 34 V5 Q2.500 2.500 5 2.500 H26 Q28.500 2.500 28.500 5 V37 H33 Q35.500 37 35.500 34 V17 Q35.500 15.500 33 15.500 H29 M10 12.500 H16 M10 19.500 H22 M10 26.500 H18" />
        </svg>
        <NoticeText><Fit w={273} s={39}>年报预披露：于</Fit><Fit w={215} s={39}>2026-04-29</Fit><Fit w={279} s={39}>披露2025年年报</Fit></NoticeText>
        <RedDot />
      </Notice>

      <Tabs>
        <Tab $on $w={158}>分时</Tab>
        <Tab>五日</Tab>
        <Tab>日K</Tab>
        <Tab>周K</Tab>
        <Tab>月K</Tab>
        <Tab><TabRow><Spacer $w={16} />更多<Caret $w={15} $h={12} $c={C.gray} $ml={9} /></TabRow></Tab>
        <GearWrap><Gear /></GearWrap>
      </Tabs>

      <InfoBar>
        <Fit w={106} s={36} c={C.amber}>均价：</Fit><Spacer $w={2} /><Fit w={89} s={37} c={C.amber}>22.00</Fit>
        <Spacer $w={12} /><Fit w={108} s={36} c={C.red}>最新：</Fit><Spacer $w={1} /><Fit w={89} s={37} c={C.red}>21.82</Fit>
        <Spacer $w={22} /><Fit w={67} s={37} c={C.red}>0.37</Fit>
        <Spacer $w={25} /><Fit w={96} s={37} c={C.red}>1.72%</Fit>
        <Spacer $w={240} />
        <Help>?</Help>
        <Mode>大单模式</Mode>
      </InfoBar>

      <Body>
        <Charts>
          <PriceChart />
          <Times>
            <Fit w={94} s={40} c={C.light}>09:15</Fit>
            <Fit w={95} s={40} c={C.light}>09:30</Fit>
            <Fit w={207} s={40} c={C.light}>11:30/13:00</Fit>
            <Fit w={93} s={40} c={C.light}>15:00</Fit>
          </Times>
          <SliderArea>
            <Track>
              <Rail $w={143} $side="l" />
              <Handle><i /><i /><i /></Handle>
              <Rail $w={278} $mid><Tick /><Tick /></Rail>
              <Handle><i /><i /><i /></Handle>
              <Rail $w={204} $side="r" />
            </Track>
          </SliderArea>
          <IndicatorBar $h={62} $line>
            <Picker><Fit w={86} s={36}>MACD</Fit><Caret $w={15} $h={12} $c={C.gray} $ml={9} /></Picker>
            <Spacer $w={5} />
            <Fit w={107} s={37}>DIF:-0.008</Fit><Spacer $w={6} /><Arrow c={C.ink} />
            <Spacer $w={10} />
            <Fit w={110} s={37} c={C.amber}>DEA:-0.018</Fit><Spacer $w={6} /><Arrow c={C.amber} w={12} />
            <Spacer $w={11} />
            <Fit w={103} s={37} c="#c62fd0">M:0.020</Fit><Spacer $w={9} /><Arrow c="#c62fd0" w={16} />
          </IndicatorBar>
          <MacdChart />
          <IndicatorBar $h={62}>
            <Picker><Fit w={87} s={30}>成交量</Fit><Caret $w={15} $h={12} $c={C.gray} $ml={9} /></Picker>
            <Spacer $w={4} />
            <Fit w={83} s={37}>58624</Fit><Spacer $w={34} />
            <Fit w={125} s={35}>分时量:10</Fit><Spacer $w={8} /><Arrow c={C.ink} down w={16} />
            <Spacer $w={39} />
            <Fit w={64} s={33}>现量:</Fit><Spacer $w={3} /><Fit w={30} s={37} c={C.red}>10</Fit>
          </IndicatorBar>
          <VolumeChart />
        </Charts>

        <Book>
          <BookTabs><BookTab $on>千档</BookTab><BookTab>大单</BookTab><BookTab>分价</BookTab></BookTabs>
          <Segment><SegItem>按数量</SegItem><SegItem $on>按金额</SegItem></Segment>
          <Link><Fit w={224} s={33}>查看千档行情 &gt;</Fit></Link>
          <Rows $h={440}>{SELL.map(d => <Level10 key={d[0]} d={d} />)}</Rows>
          <Ratio />
          <Rows $h={453} $pt={4}>{BUY.map(d => <Level10 key={d[0]} d={d} buy />)}</Rows>
          <Trades>
            <TradesHead><Fit w={140} s={35} c={C.gray}>分时成交</Fit><Caret $w={21} $h={14} $c={C.gray} $up $ml={10} /></TradesHead>
            {([['13:19', '21.79', '8716', 81, 37], ['13:19', '21.81', '10.0万', 78, 28], ['13:20', '21.82', '2.2万', 82, 37]] as const).map(([t, p, v, w, s]) => (
              <TradeRow key={t + p}>
                <Fit w={88} s={37} c={C.gray}>{t}</Fit><Spacer $w={46} />
                <Fit w={89} s={37} c={C.red}>{p}</Fit><Spacer $w={5} />
                <Arrow c="#e01010" w={16} h={23} sw={3.500} /><Spacer />
                <Fit w={w} s={s} c={C.red}>{v}</Fit>
              </TradeRow>
            ))}
          </Trades>
        </Book>
      </Body>

      <Queue $h={60}>
        <Half $first $pl={12}><Fit w={51} s={36}>卖1</Fit><Spacer $w={162} /><Fit w={90} s={38} c={C.red}>21.82</Fit><Spacer $w={135} /><Fit w={81} s={38}>8728</Fit></Half>
        <Half $pl={11}><Fit w={51} s={36}>买1</Fit><Spacer $w={162} /><Fit w={87} s={38} c={C.red}>21.81</Fit><Spacer $w={137} /><Fit w={82} s={37}>2.2万</Fit></Half>
      </Queue>
      <Queue $h={98}>
        <Half $first $pl={54} $pt={6} $gap={51}><Fit w={82} s={38} c={C.green}>8728</Fit></Half>
        <Half $pl={53} $pt={6} $gap={51}>
          <Fit w={82} s={38} c={C.red}>4362</Fit><Fit w={82} s={38} c={C.red}>6543</Fit><Fit w={80} s={38} c={C.red}>1.1万</Fit>
        </Half>
      </Queue>

      <Nav>
        <Index>
          <Caret $w={21} $h={8} $c="#777" $up $ml={127} />
          <Line $h={66} $pl={69}><Fit w={139} s={41} c={C.green}>4059.09</Fit></Line>
          <Line $h={31} $pl={41}><Fit w={70} s={36} c={C.gray}>上证</Fit><Spacer $w={45} /><Fit w={116} s={38} c={C.green}>-1.05%</Fit></Line>
        </Index>
        <NavItem>
          <NavSvg>
            <path d="M-16 -22 A27.500 27.500 0 0 1 25 13 M16 22 A27.500 27.500 0 0 1 -25 -13 M-32 -10 L-24 -14 L-25 -5 M32 10 L24 14 L25 5" />
            <path d="M-9 -14 L0 -3 L9 -14 M0 -3 V14 M-10 -3 H10 M-10 6 H10" strokeLinecap="butt" />
          </NavSvg>交易
        </NavItem>
        <NavItem>
          <NavSvg>
            <path d="M9 -26 H-19 Q-26 -26 -26 -19 V19 Q-26 26 -19 26 H19 Q26 26 26 19 V-10" />
            <path d="M20 -20 L-6 6 L-8 9 L-4 7 L22 -18 Z M24 -24 L26 -26" strokeWidth="4" />
          </NavSvg>发帖
        </NavItem>
        <NavItem>
          <NavSvg>
            <rect x="-25" y="-24" width="22" height="22" rx="3.500" /><rect x="-25" y="3" width="22" height="22" rx="3.500" /><rect x="2" y="3" width="22" height="22" rx="3.500" />
            <path d="M11.500 -24.500 Q13.500 -26 15.500 -24.500 L24.500 -15 Q26 -13 24.500 -11 L15.500 -1.500 Q13.500 0 11.500 -1.500 L3 -11 Q1.500 -13 3 -15 Z" />
          </NavSvg>功能
        </NavItem>
        <NavItem>
          <NavSvg>
            <circle r="27" />{[-12, 0, 12].map(x => <circle key={x} cx={x} r="2.800" fill={C.gray} stroke="none" />)}
          </NavSvg>设自选
        </NavItem>
      </Nav>
    </Page>
  );
}
